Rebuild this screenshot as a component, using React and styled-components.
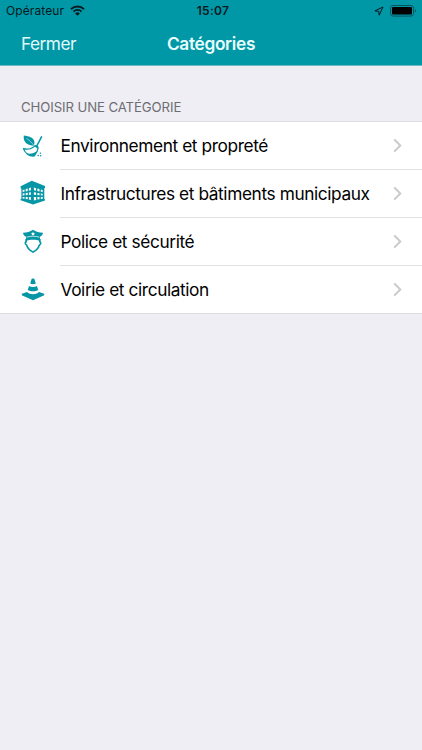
//Base imports
import React from 'react';

//Styles
import styled, { createGlobalStyle } from 'styled-components';

const theme = {
  colors: {
    primary: '#0097a7',
    icon: '#0796a5',
    background: '#efeef4',
    white: '#ffffff',
    black: '#000000',
    label: '#6d6d72',
    line: '#e2e2e5',
    border: '#dedde2',
    chevron: '#c7c7cc',
  },
};

const GlobalStyle = createGlobalStyle`
  * {
    box-sizing: border-box;
  }

  body {
    margin: 0;
    background: ${theme.colors.background};
    font-family: Inter, 'Liberation Sans', sans-serif;
  }
`;

const StyScreen = styled.div`
  width: 100%;
  min-height: 100vh;
  background: ${theme.colors.background};
`;

const StyHeader = styled.header`
  height: 66px;
  background: ${theme.colors.primary};
  border-bottom: 1px solid #6fb9c3;
`;

const StyStatusBar = styled.div`
  display: grid;
  grid-template-columns: 1fr auto 1fr;
  align-items: center;
  height: 21px;
  padding: 0 5px 0 6px;
  color: #06191c;
`;

const StatusGroup = styled.div`
  display: flex;
  align-items: center;
  justify-content: ${(props) => (props.$end ? 'flex-end' : 'flex-start')};
  gap: 6px;
`;

const Carrier = styled.span`
  font-size: 12px;
  line-height: 20px;
  letter-spacing: 0.1px;
`;

const Clock = styled.span`
  padding-left: 3px;
  font-size: 12px;
  font-weight: 600;
  line-height: 20px;
  letter-spacing: 0.3px;
`;

const StyNavBar = styled.div`
  display: grid;
  grid-template-columns: 1fr auto 1fr;
  align-items: center;
  height: 44px;
  padding: 0 21px;
`;

const NavButton = styled.a`
  color: #e2fafb;
  font-size: 17.3px;
  letter-spacing: -0.5px;
`;

const NavTitle = styled.h1`
  margin: 0;
  color: #e9fdfd;
  font-size: 17.3px;
  font-weight: 600;
  letter-spacing: -0.33px;
`;

const SectionTitle = styled.h2`
  margin: 0;
  padding: 33px 21px 0;
  height: 55px;
  color: ${theme.colors.label};
  font-size: 13.2px;
  font-weight: 400;
  line-height: 17px;
  letter-spacing: -0.1px;
`;

const CategoryList = styled.ul`
  margin: 0;
  padding: 0;
  list-style: none;
  background: ${theme.colors.white};
  border-top: 1px solid ${theme.colors.border};
  border-bottom: 1px solid ${theme.colors.border};
`;

const CategoryRow = styled.li`
  display: flex;
  height: 48px;
  padding-left: 19px;

  &:last-child {
    height: 47px;
  }

  & > svg {
    flex: none;
    width: 28px;
    height: 28px;
    margin-top: 10px;
    color: ${theme.colors.icon};
  }
`;

const CategoryContent = styled.div`
  display: flex;
  flex: 1;
  align-items: center;
  justify-content: space-between;
  margin-left: 13px;
  padding-right: 20px;
  border-bottom: 1px solid ${theme.colors.line};

  ${CategoryRow}:last-child & {
    border-bottom: 0;
  }
`;

const CategoryName = styled.span`
  padding-left: 0.5px;
  color: ${theme.colors.black};
  font-size: 17.3px;
  letter-spacing: -0.4px;
  white-space: nowrap;
`;

const WifiIcon = () => (
  <svg width="15" height="11" viewBox="0 0 15 11" fill="none" stroke="currentColor">
    <path d="M1 4.1a9.3 9.3 0 0 1 13 0" strokeWidth="2" />
    <path d="M3.5 6.6a5.7 5.7 0 0 1 8 0" strokeWidth="1.8" />
    <path d="M7.5 10.7 5.2 8.4a3.3 3.3 0 0 1 4.6 0z" fill="currentColor" stroke="none" />
  </svg>
);

const LocationIcon = () => (
  <svg width="10" height="10" viewBox="0 0 10 10" fill="none" stroke="currentColor">
    <path d="M9 1 .9 4.9l3.9.4.4 3.9z" strokeWidth="1" strokeLinejoin="round" />
  </svg>
);

const BatteryIcon = () => (
  <svg width="27" height="12" viewBox="0 0 27 12">
    <rect x=".5" y=".5" width="23" height="10.6" rx="2.6" fill="none" stroke="#07545d" />
    <rect x="2" y="2" width="20" height="7.6" rx="1" fill="#000000" />
    <path d="M24.8 4v3.6c1.5-.5 1.5-3.1 0-3.6z" fill="#07545d" />
  </svg>
);

const LeafIcon = () => (
  <svg viewBox="0 0 28 28" fill="currentColor">
    <path d="M4.8 3.6c5.2.6 9.2 2.1 10.3 5.2.6 1.7.3 3.4-.2 5C8.8 13.8 3.8 10.6 4.8 3.6z" />
    <path d="M7.5 6.5c2.9 1.7 5.7 4.1 7.6 7.6" fill="none" stroke="#ffffff" strokeWidth=".5" />
    <path d="M22.5 4.9 18 13.5" fill="none" stroke="currentColor" strokeWidth="1.6" strokeLinecap="round" />
    <path
      d="M15.8 13.9c1.6-.8 3.6.5 3.3 2.4-.3 2.8-1.7 5.2-3.9 7.7-5.2.5-8.5-2.2-10.8-7.3 4.5 1.1 8.7.1 11.4-2.8z"
      fill="#ffffff"
      stroke="currentColor"
      strokeWidth="1.2"
      strokeLinejoin="round"
    />
    <path d="M7.4 21.1c3.9 1.2 7.4.4 10.9-2.3-.8 2-1.8 3.5-3.1 5.1-3.1.3-5.7-.6-7.8-2.8z" />
    <path d="M14.9 14.7c1.3-.2 2.8.8 3.4 2.2l.9-1.3-1.7-2.2z" />
    <circle cx="19.2" cy="23.5" r=".8" />
    <circle cx="21.4" cy="21.2" r=".8" />
    <circle cx="21.7" cy="23.8" r=".8" />
  </svg>
);

const BuildingIcon = () => (
  <svg viewBox="0 0 28 28" fill="currentColor">
    <path d="M12.8.7 26 5.9v2.2l-.7.1v10.7l.7.3v1.3l-12 4L1.6 20.3V19l.8-.3V8.6l-.8-.3V6.2z" />
    <g fill="#ffffff">
      <path d="m3.6 9.9 1.9-.5v2.2l-1.9.4zM6.7 9.1l2-.6v2.5l-2 .4zM9.9 8.2l2-.6v2.7l-2 .5z" />
      <path d="m3.6 13.6 1.9-.3v2l-1.9.1zM6.7 13.1l2-.3v2.3l-2 .2zM9.9 12.6l2-.3v2.5l-2 .2z" />
      <path d="M3.6 17h1.9v1.8l-1.900-.2zM6.700 17h2v2.300l-2-.3zM9.900 16.900h2v3l-2-.3z" />
      <path d="m14.900 7.600 2.200.6v2.500l-2.200-.5zM18.400 8.600l2.100.5v2.400l-2.100-.5zM21.800 9.600l1.900.5v2l-1.900-.4z" />
      <path d="m14.900 12.300 2.200.3V15l-2.200-.2zM18.400 12.900l2.100.3v2.100l-2.100-.2zM21.800 13.400l1.900.3v1.800l-1.900-.2z" />
      <path d="M14.900 16.900h2.200v3.100l-2.200.4zM18.400 16.900h2.100v2.400l-2.100.3zM21.800 17h1.900v1.700l-1.900.3z" />
    </g>
  </svg>
);

const PoliceIcon = () => (
  <svg viewBox="0 0 28 28" fill="currentColor">
    <path
      d="M7.2 11v2.900c-1.400.1-1.200 2.500.4 3.100.5 2.100 1.500 3.500 3 4.900L14 24.200l3.400-2.300c1.500-1.400 2.500-2.800 3-4.900 1.600-.6 1.800-3 .4-3.100V11"
      fill="#ffffff"
      stroke="currentColor"
      strokeWidth="1.600"
      strokeLinejoin="round"
    />
    <path d="M14 1.700c2.900 2 6.100 2.900 10 3.100-.2 1.900-1.300 3.200-3.100 3.900l.4 4.300c-4.400-1.700-10.200-1.700-14.600 0l.4-4.300C5.300 8 4.200 6.700 4 4.800 7.900 4.600 11.100 3.700 14 1.700z" />
    <path d="M7.500 9.200c4-1.300 9-1.300 13 0" fill="none" stroke="#ffffff" strokeWidth=".7" />
    <path d="m14 3.700.6 1.300 1.400.2-1 1 .2 1.400-1.200-.7-1.200.7.2-1.400-1-1 1.400-.2z" fill="#ffffff" />
  </svg>
);

const ConeIcon = () => (
  <svg viewBox="0 0 28 28" fill="currentColor">
    <path d="M12.400 3.500c.3-1.400 2.900-1.400 3.200 0l1.200 3.900c-1.500 1-4.100 1-5.600 0z" />
    <path d="M10.100 9.900c2.300 1.400 5.500 1.400 7.800 0l1.400 4c-2.900 1.900-7.700 1.900-10.600 0z" />
    <path d="M8 15.900c3.200 3 8.800 3 12 0l5.200 1.800v1.500L14 24.200 2.800 19.200v-1.500z" />
  </svg>
);

const ChevronIcon = () => (
  <svg width="9" height="15" viewBox="0 0 9 15" fill="none">
    <path d="m1.2 1.4 6.1 6.1-6.1 6.1" stroke={theme.colors.chevron} strokeWidth="1.9" />
  </svg>
);

const categories = [
  { name: 'Environnement et propreté', icon: <LeafIcon /> },
  { name: 'Infrastructures et bâtiments municipaux', icon: <BuildingIcon /> },
  { name: 'Police et sécurité', icon: <PoliceIcon /> },
  { name: 'Voirie et circulation', icon: <ConeIcon /> },
];

export default function Categories() {
  return (
    <StyScreen>
      <GlobalStyle />
      <StyHeader>
        <StyStatusBar>
          <StatusGroup>
            <Carrier>Opérateur</Carrier>
            <WifiIcon />
          </StatusGroup>
          <Clock>15:07</Clock>
          <StatusGroup $end>
            <LocationIcon />
            <BatteryIcon />
          </StatusGroup>
        </StyStatusBar>
        <StyNavBar>
          <NavButton>Fermer</NavButton>
          <NavTitle>Catégories</NavTitle>
        </StyNavBar>
      </StyHeader>
      <SectionTitle>CHOISIR UNE CATÉGORIE</SectionTitle>
      <CategoryList>
        {categories.map(({ name, icon }) => (
          <CategoryRow key={name}>
            {icon}
            <CategoryContent>
              <CategoryName>{name}</CategoryName>
              <ChevronIcon />
            </CategoryContent>
          </CategoryRow>
        ))}
      </CategoryList>
    </StyScreen>
  );
}
